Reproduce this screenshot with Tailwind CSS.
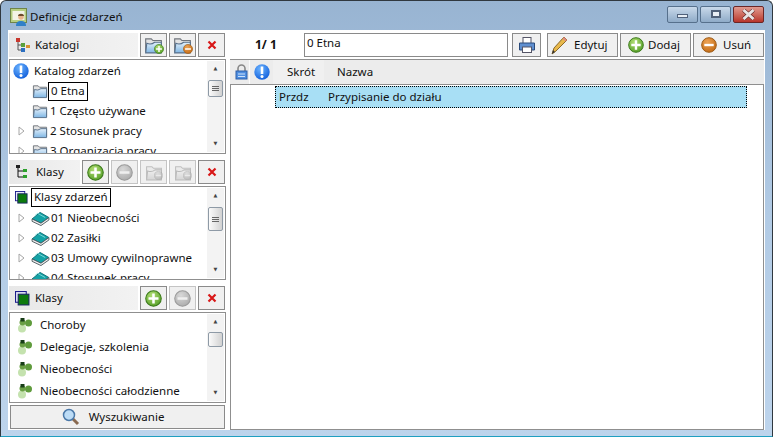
<!DOCTYPE html>
<html lang="pl">
<head>
<meta charset="UTF-8">
<title>Definicje zdarzeń</title>
<script src="https://cdn.jsdelivr.net/npm/@tailwindcss/browser@4"></script>
</head>
<body class="bg-white overflow-hidden font-['Noto_Sans','DejaVu_Sans',sans-serif] text-[11.5px] text-[#111]">
<svg class="absolute w-0 h-0">
  <defs>
    <linearGradient id="fg" x1="0" y1="0" x2="0" y2="1"><stop offset="0" stop-color="#e4f1fb"/><stop offset="1" stop-color="#7fb6e4"/></linearGradient>
    <radialGradient id="ig" cx=".4" cy=".3" r=".8"><stop offset="0" stop-color="#6cb4ff"/><stop offset="1" stop-color="#0a58d8"/></radialGradient>
    <radialGradient id="ag" cx=".4" cy=".3" r=".8"><stop offset="0" stop-color="#b2de74"/><stop offset="1" stop-color="#4f9a22"/></radialGradient>
    <radialGradient id="og" cx=".4" cy=".3" r=".8"><stop offset="0" stop-color="#eda354"/><stop offset="1" stop-color="#c0660f"/></radialGradient>
    <radialGradient id="mg" cx=".4" cy=".3" r=".8"><stop offset="0" stop-color="#d8d8d8"/><stop offset="1" stop-color="#a8a8a8"/></radialGradient>
  </defs>
  <symbol id="folder" viewBox="0 0 17 16"><path d="M1.500 14V2.500h5l1.500 1.500h7.500v10z" fill="#e3e3e3" stroke="#70757c"/><path d="M1.500 15 2.500 6.500q4 1.500 7-1h6V15z" fill="url(#fg)" stroke="#566f8a"/></symbol>
  <symbol id="book" viewBox="0 0 20 16"><path d="M1 8.500 9.500 1.500 19 7l-8.500 6z" fill="#14a3a6" stroke="#0c6d74"/><path d="M1 8.500v2.500l9.500 4.500 8.500-6V7l-8.500 6z" fill="#f0f0f0" stroke="#4f5a60"/><path d="M4 5l3-2.500 8 4.500" stroke="#7fd8d8" fill="none"/></symbol>
  <symbol id="add" viewBox="0 0 16 16"><circle cx="8" cy="8" r="7.300" fill="url(#ag)" stroke="#3c7a1c"/><path d="M8 3.300v9.400M3.300 8h9.400" stroke="#fff" stroke-width="2.400"/></symbol>
  <symbol id="minus" viewBox="0 0 16 16"><circle cx="8" cy="8" r="7.300" fill="url(#mg)" stroke="#9b9b9b"/><path d="M3.300 8h9.400" stroke="#efefef" stroke-width="2.400"/></symbol>
  <symbol id="rem" viewBox="0 0 16 16"><circle cx="8" cy="8" r="7.300" fill="url(#og)" stroke="#9c5a16"/><path d="M3.300 8h9.400" stroke="#fff" stroke-width="2.400"/></symbol>
  <symbol id="x" viewBox="0 0 10 10"><path d="M1.500 1.500l7 7M8.500 1.500l-7 7" stroke="#d81818" stroke-width="2.200"/></symbol>
  <symbol id="cls" viewBox="0 0 14 14"><rect x=".5" y=".5" width="10" height="10" fill="#e6e8f7" stroke="#1c1c8c"/><rect x="3" y="3" width="10" height="10" fill="#0d7a0d" stroke="#17275f"/></symbol>
  <symbol id="dots" viewBox="0 0 16 16"><circle cx="11.500" cy="6" r="3.500" fill="#5f9b3c"/><circle cx="5" cy="11.500" r="4" fill="#c4e2ae"/><circle cx="5.500" cy="5.500" r="3" fill="#6a9f45"/><rect x="3.500" y="1" width="4" height="3.500" fill="#173d17"/></symbol>
  <symbol id="info" viewBox="0 0 16 16"><circle cx="8" cy="8" r="7.700" fill="url(#ig)"/><path d="M8 2.500v7.500" stroke="#fff" stroke-width="2.600"/><circle cx="8" cy="12.500" r="1.500" fill="#fff"/></symbol>
  <symbol id="tri" viewBox="0 0 7 10"><path d="M1 1l5 4-5 4z" fill="#fff" stroke="#a6a6a6"/></symbol>
</svg>

<div class="w-[773px] h-[437px] flex flex-col rounded-t-[6px] border border-[#30383f] border-b-[#1f9fc0] bg-gradient-to-b from-[#98b4d2] via-[#b2cbe5] to-[#bdd4ec]">
  <!-- title bar -->
  <div class="h-[29px] shrink-0 flex items-center pl-[9px] pr-[8px]">
    <svg width="18" height="18" viewBox="0 0 18 18" class="mr-[2px] mt-[2px]"><rect x=".5" y=".5" width="16" height="14" fill="#b7cf82" stroke="#6f8448"/><rect x="2.500" y="3" width="12" height="9" fill="#f3f3e6"/><circle cx="11" cy="9" r="2.800" fill="#e8b48c"/><path d="M6 18c0-4 2-5 5-5s5 1 5 5z" fill="#2f80c8"/><path d="M8 8c0-3 6-3 6 0z" fill="#6b4a2a"/></svg>
    <span class="mt-[2px]">Definicje zdarzeń</span>
    <div class="ml-auto flex gap-[2px] -mt-[3px]">
      <div class="w-[31px] h-[17px] rounded-[2px] border border-[#56708c] bg-gradient-to-b from-[#c9d9ea] to-[#8fabc8] flex items-center justify-center"><div class="w-[11px] h-[4px] mt-[4px] bg-[#e8eef5] border border-[#50617a]"></div></div>
      <div class="w-[31px] h-[17px] rounded-[2px] border border-[#56708c] bg-gradient-to-b from-[#c9d9ea] to-[#8fabc8] flex items-center justify-center"><div class="w-[10px] h-[8px] bg-[#e8eef5] border-2 border-[#50617a]"></div></div>
      <div class="w-[31px] h-[17px] rounded-[2px] border border-[#6b2626] bg-gradient-to-b from-[#e09a90] to-[#b8332a] flex items-center justify-center">
        <svg width="15" height="11" viewBox="0 0 15 11"><path d="M2.500 1l10 9M12.500 1l-10 9" stroke="#5a2020" stroke-width="4"/><path d="M2.500 1l10 9M12.500 1l-10 9" stroke="#e8e4e4" stroke-width="3"/></svg>
      </div>
    </div>
  </div>

  <!-- client area -->
  <div class="mx-[7px] h-[400px] shrink-0 bg-white flex pt-[3px] pl-[1px]">
    <!-- left column -->
    <div class="w-[217px] shrink-0 flex flex-col">
      <!-- katalogi -->
      <div class="h-[24px] flex gap-[2px]">
        <div class="w-[129px] bg-gradient-to-r from-[#e8e8e8] to-[#f2f2f2] flex items-center pl-[6px] gap-[5px]">
          <svg width="15" height="16" viewBox="0 0 15 16"><path d="M3 4v9h4M3 8h4" stroke="#555" fill="none"/><rect x="1" y="1" width="4" height="4" fill="#c8372d"/><rect x="6" y="6" width="4" height="4" fill="#5aa03c"/><rect x="6" y="11" width="4" height="4" fill="#2c6fc0"/><rect x="11" y="8" width="4" height="3" fill="#d89030"/></svg>
          <span>Katalogi</span>
        </div>
        <div class="w-[27px] border border-[#8a8a8a] bg-[#f0f0f0] flex items-center justify-center relative"><svg width="19" height="18"><use href="#folder"/></svg><svg width="10" height="10" class="absolute right-[2px] bottom-[2px]"><use href="#add"/></svg></div>
        <div class="w-[27px] border border-[#8a8a8a] bg-[#f0f0f0] flex items-center justify-center relative"><svg width="19" height="18"><use href="#folder"/></svg><svg width="10" height="10" class="absolute right-[2px] bottom-[2px]"><use href="#rem"/></svg></div>
        <div class="w-[27px] border border-[#8a8a8a] bg-[#f0f0f0] flex items-center justify-center"><svg width="10" height="10"><use href="#x"/></svg></div>
      </div>
      <div class="h-[95px] mt-[2px] border border-[#8f8f8f] flex overflow-hidden">
        <div class="flex-1 overflow-hidden">
          <div class="h-[21px] flex items-center pl-[3px]"><svg width="16" height="16" class="mr-[5px]"><use href="#info"/></svg>Katalog zdarzeń</div>
          <div class="h-[20px] flex items-center pl-[22px]"><svg width="16" height="16"><use href="#folder"/></svg><span class="border border-black px-[2px] h-[19px] leading-[16px]">0 Etna</span></div>
          <div class="h-[20px] flex items-center pl-[22px]"><svg width="16" height="16"><use href="#folder"/></svg><span class="ml-[2px]">1 Często używane</span></div>
          <div class="h-[20px] flex items-center pl-[8px]"><svg width="7" height="10" class="mr-[7px]"><use href="#tri"/></svg><svg width="16" height="16"><use href="#folder"/></svg><span class="ml-[2px]">2 Stosunek pracy</span></div>
          <div class="h-[20px] flex items-center pl-[8px]"><svg width="7" height="10" class="mr-[7px]"><use href="#tri"/></svg><svg width="16" height="16"><use href="#folder"/></svg><span class="ml-[2px]">3 Organizacja pracy</span></div>
        </div>
        <div class="w-[17px] my-[1px] mr-[1px] bg-[#f3f3f3] flex flex-col items-center relative">
          <div class="h-[16px] flex items-center text-[#444] text-[5px]">▲</div>
          <div class="w-[15px] h-[17px] mt-[3px] border border-[#8e9aa6] rounded-[2px] bg-gradient-to-r from-[#fbfbfb] to-[#d2d2d2] flex flex-col gap-[1px] items-center justify-center"><i class="w-[7px] h-px bg-[#666]"></i><i class="w-[7px] h-px bg-[#666]"></i><i class="w-[7px] h-px bg-[#666]"></i></div>
          <div class="mt-auto h-[16px] flex items-center text-[#444] text-[5px]">▼</div>
        </div>
      </div>

      <!-- klasy -->
      <div class="h-[24px] mt-[6px] flex gap-[2px]">
        <div class="w-[71px] bg-gradient-to-r from-[#e8e8e8] to-[#f2f2f2] flex items-center pl-[6px] gap-[6px]">
          <svg width="15" height="16" viewBox="0 0 15 16"><path d="M3 3v10h5M3 7h5" stroke="#111" fill="none"/><rect x="1" y="1" width="4" height="3" fill="#222"/><rect x="8" y="5" width="4" height="3" fill="#2ca02c"/><rect x="8" y="11" width="4" height="3" fill="#2ca02c"/></svg>
          <span>Klasy</span>
        </div>
        <div class="w-[27px] border border-[#8a8a8a] bg-[#f0f0f0] flex items-center justify-center"><svg width="17" height="17"><use href="#add"/></svg></div>
        <div class="w-[27px] border border-[#c4c4c4] bg-[#f0f0f0] flex items-center justify-center"><svg width="17" height="17"><use href="#minus"/></svg></div>
        <div class="w-[27px] border border-[#c4c4c4] bg-[#f0f0f0] flex items-center justify-center relative"><svg width="18" height="17" class="opacity-40 grayscale"><use href="#folder"/></svg><svg width="9" height="9" class="absolute right-[3px] bottom-[3px] opacity-60"><use href="#minus"/></svg></div>
        <div class="w-[27px] border border-[#c4c4c4] bg-[#f0f0f0] flex items-center justify-center relative"><svg width="18" height="17" class="opacity-40 grayscale"><use href="#folder"/></svg><svg width="9" height="9" class="absolute right-[3px] bottom-[3px] opacity-60"><use href="#minus"/></svg></div>
        <div class="w-[27px] border border-[#8a8a8a] bg-[#f0f0f0] flex items-center justify-center"><svg width="10" height="10"><use href="#x"/></svg></div>
      </div>
      <div class="h-[94px] mt-[2px] border border-[#8f8f8f] flex overflow-hidden">
        <div class="flex-1 overflow-hidden">
          <div class="h-[21px] flex items-center pl-[5px]"><svg width="13" height="13" class="mr-[3px]"><use href="#cls"/></svg><span class="border border-black px-[2px] h-[19px] leading-[16px]">Klasy zdarzeń</span></div>
          <div class="h-[20px] flex items-center pl-[8px]"><svg width="7" height="10" class="mr-[6px]"><use href="#tri"/></svg><svg width="19" height="15"><use href="#book"/></svg><span class="ml-[1px]">01 Nieobecności</span></div>
          <div class="h-[20px] flex items-center pl-[8px]"><svg width="7" height="10" class="mr-[6px]"><use href="#tri"/></svg><svg width="19" height="15"><use href="#book"/></svg><span class="ml-[1px]">02 Zasiłki</span></div>
          <div class="h-[20px] flex items-center pl-[8px]"><svg width="7" height="10" class="mr-[6px]"><use href="#tri"/></svg><svg width="19" height="15"><use href="#book"/></svg><span class="ml-[1px]">03 Umowy cywilnoprawne</span></div>
          <div class="h-[20px] flex items-center pl-[8px]"><svg width="7" height="10" class="mr-[6px]"><use href="#tri"/></svg><svg width="19" height="15"><use href="#book"/></svg><span class="ml-[1px]">04 Stosunek pracy</span></div>
        </div>
        <div class="w-[17px] my-[1px] mr-[1px] bg-[#f3f3f3] flex flex-col items-center">
          <div class="h-[16px] flex items-center text-[#444] text-[5px]">▲</div>
          <div class="w-[15px] h-[24px] mt-[3px] border border-[#8e9aa6] rounded-[2px] bg-gradient-to-r from-[#fbfbfb] to-[#d2d2d2] flex flex-col gap-[1px] items-center justify-center"><i class="w-[7px] h-px bg-[#666]"></i><i class="w-[7px] h-px bg-[#666]"></i><i class="w-[7px] h-px bg-[#666]"></i></div>
          <div class="mt-auto h-[16px] flex items-center text-[#444] text-[5px]">▼</div>
        </div>
      </div>

      <!-- klasy lista -->
      <div class="h-[24px] mt-[6px] flex gap-[2px]">
        <div class="w-[129px] bg-gradient-to-r from-[#e8e8e8] to-[#f2f2f2] flex items-center pl-[6px] gap-[5px]">
          <svg width="15" height="15"><use href="#cls"/></svg>
          <span>Klasy</span>
        </div>
        <div class="w-[27px] border border-[#8a8a8a] bg-[#f0f0f0] flex items-center justify-center"><svg width="17" height="17"><use href="#add"/></svg></div>
        <div class="w-[27px] border border-[#c4c4c4] bg-[#f0f0f0] flex items-center justify-center"><svg width="17" height="17"><use href="#minus"/></svg></div>
        <div class="w-[27px] border border-[#8a8a8a] bg-[#f0f0f0] flex items-center justify-center"><svg width="10" height="10"><use href="#x"/></svg></div>
      </div>
      <div class="h-[91px] mt-[2px] border border-[#8f8f8f] flex overflow-hidden">
        <div class="flex-1 overflow-hidden pt-[1px]">
          <div class="h-[22px] flex items-center pl-[7px]"><svg width="16" height="16" class="mr-[7px]"><use href="#dots"/></svg>Choroby</div>
          <div class="h-[22px] flex items-center pl-[7px]"><svg width="16" height="16" class="mr-[7px]"><use href="#dots"/></svg>Delegacje, szkolenia</div>
          <div class="h-[22px] flex items-center pl-[7px]"><svg width="16" height="16" class="mr-[7px]"><use href="#dots"/></svg>Nieobecności</div>
          <div class="h-[22px] flex items-center pl-[7px]"><svg width="16" height="16" class="mr-[7px]"><use href="#dots"/></svg>Nieobecności całodzienne</div>
        </div>
        <div class="w-[17px] my-[1px] mr-[1px] bg-[#f3f3f3] flex flex-col items-center">
          <div class="h-[16px] flex items-center text-[#444] text-[5px]">▲</div>
          <div class="w-[15px] h-[15px] mt-[2px] border border-[#8e9aa6] rounded-[2px] bg-gradient-to-r from-[#fbfbfb] to-[#d2d2d2]"></div>
          <div class="mt-auto h-[16px] flex items-center text-[#444] text-[5px]">▼</div>
        </div>
      </div>
      <div class="h-[24px] mt-[2px] mx-[1px] border border-[#8a8a8a] bg-[#f0f0f0] flex items-center justify-center gap-[9px] pr-[9px]">
        <svg width="18" height="18" viewBox="0 0 18 18"><path d="M10 10l6 6" stroke="#8a6a50" stroke-width="3"/><circle cx="7" cy="7" r="5.500" fill="#bcdcf6" stroke="#4a78a8" stroke-width="1.500"/></svg>
        <span>Wyszukiwanie</span>
      </div>
    </div>

    <!-- right column -->
    <div class="ml-[4px] flex-1 flex flex-col pr-[1px]">
      <div class="h-[24px] flex">
        <div class="w-[74px] flex items-center pl-[25px] font-bold text-[12px]">1/ 1</div>
        <div class="w-[204px] border border-[#8a8a8a] px-[2px] leading-[15px] pt-[1px]">0 Etna</div>
        <div class="w-[29px] ml-[4px] border border-[#8a8a8a] bg-[#f0f0f0] flex items-center justify-center">
          <svg width="18" height="18" viewBox="0 0 18 18"><rect x="5" y="1.500" width="8" height="6" fill="#fff" stroke="#556"/><path d="M1.500 7h15v7h-15z" fill="#5f8fd0" stroke="#2a4a7a"/><rect x="4.500" y="11" width="9" height="5.500" fill="#fff" stroke="#556"/></svg>
        </div>
        <div class="w-[71px] ml-[6px] border border-[#8a8a8a] bg-[#f0f0f0] flex items-center pl-[1px] gap-[5px]">
          <svg width="20" height="20" viewBox="0 0 20 20"><path d="M3 19l2-6L15 2l3 3L7 16z" fill="#e8b84a" stroke="#8a6a2a"/><path d="M15 2l3 3-1.500 1.500-3-3z" fill="#e08a80"/><path d="M3 19l1-4 2 2z" fill="#333"/></svg>
          <span>Edytuj</span>
        </div>
        <div class="w-[71px] ml-[2px] border border-[#8a8a8a] bg-[#f0f0f0] flex items-center pl-[7px] gap-[4px]"><svg width="16" height="16"><use href="#add"/></svg><span>Dodaj</span></div>
        <div class="w-[71px] ml-[2px] border border-[#8a8a8a] bg-[#f0f0f0] flex items-center pl-[7px] gap-[6px]"><svg width="16" height="16"><use href="#rem"/></svg><span>Usuń</span></div>
      </div>

      <div class="mt-[2px] flex-1 flex flex-col border-t border-[#8f8f8f]">
        <div class="h-[24px] bg-[#ececec] flex items-center">
          <div class="w-[17px] h-full flex items-center justify-center border-r border-white/80 ml-[3px]"><svg width="13" height="16" viewBox="0 0 13 16"><path d="M3 7V4.500a3.500 3.500 0 017 0V7" fill="none" stroke="#888" stroke-width="1.600"/><rect x="1" y="7" width="11" height="8" fill="#4f8ee0" stroke="#2c5ea8"/><path d="M3 10h7M3 12.500h7" stroke="#cfe3fa"/></svg></div>
          <div class="w-[23px] h-full flex items-center justify-center"><svg width="16" height="16"><use href="#info"/></svg></div>
          <div class="w-[51px] h-full bg-[#f0f0f0] flex items-center pl-[14px]">Skrót</div>
          <div class="pl-[13px]">Nazwa</div>
        </div>
        <div class="flex-1 border border-[#8f8f8f] bg-white pt-[1px]">
          <div class="ml-[44px] w-[472px] h-[22px] bg-[#a8dff5] border border-dotted border-black flex items-center">
            <span class="w-[52px] pl-[3px]">Przdz</span><span>Przypisanie do działu</span>
          </div>
        </div>
      </div>
    </div>
  </div>
</div>
</body>
</html>
